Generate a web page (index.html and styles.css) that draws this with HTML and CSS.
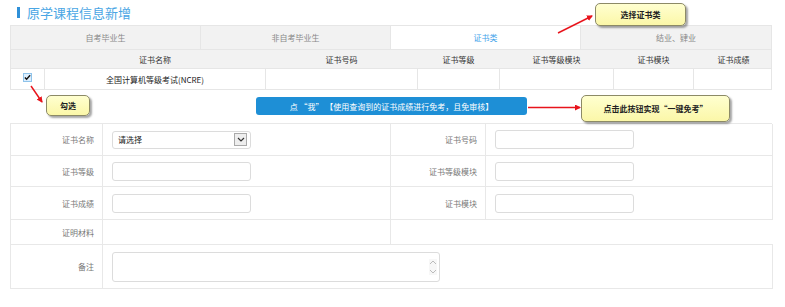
FILE: index.html
```html
<!DOCTYPE html>
<html lang="zh-CN">
<head>
  <meta charset="UTF-8">
  <meta name="viewport" content="width=device-width, initial-scale=1.0">
  <title>原学课程信息新增</title>
  <link rel="stylesheet" href="styles.css">
</head>
<body>
  <div class="page">
    <h2 class="title"><span class="bar"></span>原学课程信息新增</h2>

    <div class="wrap">
      <div class="tabs">
        <div class="tab">自考毕业生</div>
        <div class="tab">非自考毕业生</div>
        <div class="tab active">证书类</div>
        <div class="tab">结业、肄业</div>
      </div>

      <div class="grid head">
        <div></div>
        <div>证书名称</div>
        <div>证书号码</div>
        <div>证书等级</div>
        <div>证书等级模块</div>
        <div>证书模块</div>
        <div>证书成绩</div>
      </div>
      <div class="grid row">
        <div><span class="check">
          <svg width="8" height="7" viewBox="0 0 8 7"><path d="M1 3.5 L3 5.5 L7 1" fill="none" stroke="#111" stroke-width="1.6"/></svg>
        </span></div>
        <div>全国计算机等级考试(NCRE)</div>
        <div></div>
        <div></div>
        <div></div>
        <div></div>
        <div></div>
      </div>

      <div class="actions">
        <button class="btn">点 “我” 【使用查询到的证书成绩进行免考，且免审核】</button>
      </div>

      <div class="form">
        <div class="lbl">证书名称</div>
        <div class="val">
          <div class="select">请选择<span class="drop">
            <svg width="8" height="5" viewBox="0 0 8 5"><path d="M1 1 L4 4 L7 1" fill="none" stroke="#333" stroke-width="1.2"/></svg>
          </span></div>
        </div>
        <div class="lbl">证书号码</div>
        <div class="val"><div class="input"></div></div>

        <div class="lbl">证书等级</div>
        <div class="val"><div class="input"></div></div>
        <div class="lbl">证书等级模块</div>
        <div class="val"><div class="input"></div></div>

        <div class="lbl">证书成绩</div>
        <div class="val"><div class="input"></div></div>
        <div class="lbl">证书模块</div>
        <div class="val"><div class="input"></div></div>

        <div class="lbl">证明材料</div>
        <div class="val"></div>
        <div class="blank"></div>

        <div class="lbl">备注</div>
        <div class="val wide">
          <div class="textarea">
            <span class="spin">
              <svg width="8" height="16" viewBox="0 0 8 16"><path d="M1 5 L4 2 L7 5 M1 11 L4 14 L7 11" fill="none" stroke="#bbb" stroke-width="1"/></svg>
            </span>
          </div>
        </div>
      </div>
    </div>

    <div class="tip tip-type">选择证书类</div>
    <div class="tip tip-check">勾选</div>
    <div class="tip tip-btn">点击此按钮实现“一键免考”</div>

    <svg class="arrows" width="785" height="307" viewBox="0 0 785 307">
      <defs>
        <marker id="head" markerWidth="6" markerHeight="6" refX="5" refY="3" orient="auto" markerUnits="userSpaceOnUse">
          <path d="M0 0 L6 3 L0 6 Z" fill="#e8141c"/>
        </marker>
      </defs>
      <line x1="558" y1="33" x2="592" y2="16" stroke="#e8141c" stroke-width="1.5" marker-end="url(#head)"/>
      <line x1="31" y1="86" x2="42" y2="102" stroke="#e8141c" stroke-width="1.5" marker-end="url(#head)"/>
      <line x1="528" y1="107.5" x2="580" y2="107.5" stroke="#e8141c" stroke-width="1.5" marker-end="url(#head)"/>
    </svg>
  </div>
</body>
</html>
```

FILE: styles.css
```css
* {
  box-sizing: border-box;
}
body {
  margin: 0;
  background: #fff;
  font-family: "Noto Sans CJK SC", "Liberation Sans", sans-serif;
  font-size: 8px;
  color: #444;
}
.page {
  position: relative;
  width: 785px;
  height: 307px;
  overflow: hidden;
}
.title {
  margin: 0;
  height: 25px;
  padding-left: 17px;
  display: flex;
  align-items: center;
  gap: 7px;
  font-size: 13px;
  font-weight: normal;
  line-height: 14px;
  color: #4aa6e4;
}
.title .bar {
  width: 3px;
  height: 11px;
  background: #2f90d8;
}
.wrap {
  margin-left: 10px;
  width: 762px;
}
.tabs {
  display: grid;
  grid-template-columns: repeat(4, 1fr);
  height: 24px;
  border: 1px solid #e6e6e6;
  border-bottom: 0;
  background: #f2f2f2;
}
.tab {
  display: flex;
  align-items: center;
  justify-content: center;
  color: #888;
  border-right: 1px solid #e6e6e6;
}
.tab:last-child {
  border-right: 0;
}
.tab.active {
  background: #fff;
  color: #3fa3ea;
}
.grid {
  display: grid;
  grid-template-columns: 34px 221px 152px 82px 114px 80px 79px;
  border: 1px solid #e6e6e6;
  border-top: 0;
}
.grid > div {
  display: flex;
  align-items: center;
  justify-content: center;
  border-right: 1px solid #e6e6e6;
}
.grid > div:last-child {
  border-right: 0;
}
.head {
  height: 20px;
  background: #f2f2f2;
  color: #333;
  border-top: 1px solid #e6e6e6;
}
.head > div {
  border-right-color: #f2f2f2;
}
.row {
  height: 21px;
  color: #222;
}
.check {
  width: 9px;
  height: 9px;
  margin: -3px 0 0 0;
  border: 1px solid #8fc3ea;
  background: #dcefff;
  display: flex;
  align-items: center;
  justify-content: center;
}
.actions {
  height: 33px;
  display: flex;
  justify-content: center;
  align-items: center;
  padding-bottom: 1px;
}
.btn {
  width: 271px;
  height: 18px;
  margin-left: 1px;
  border: 0;
  border-radius: 3px;
  background: #1e8fd6;
  color: #fff;
  font-family: inherit;
  font-size: 8px;
  padding: 0;
}
.form {
  display: grid;
  grid-template-columns: 92px 288px 95px 287px;
  grid-template-rows: 32px 31px 33px 25px 44px;
  border-top: 1px solid #e8e8e8;
  border-left: 1px solid #e8e8e8;
}
.lbl,
.val {
  display: flex;
  align-items: center;
  border-right: 1px solid #e8e8e8;
  border-bottom: 1px solid #e8e8e8;
}
.lbl {
  justify-content: flex-end;
  padding-right: 8px;
  color: #777;
}
.val {
  padding-left: 9px;
}
.val.wide {
  grid-column: span 3;
}
.blank {
  grid-column: span 2;
  border-bottom: 1px solid #e8e8e8;
}
.input,
.select {
  width: 139px;
  height: 19px;
  border: 1px solid #dcdcdc;
  border-radius: 3px;
  background: #fff;
}
.select {
  display: flex;
  align-items: center;
  justify-content: space-between;
  padding: 0 3px 0 5px;
  color: #222;
  height: 18px;
}
.drop {
  width: 13px;
  height: 13px;
  border: 1px solid #aaa;
  background: #eee;
  display: flex;
  align-items: center;
  justify-content: center;
}
.textarea {
  width: 328px;
  height: 30px;
  border: 1px solid #dcdcdc;
  border-radius: 3px;
  display: flex;
  justify-content: flex-end;
  align-items: center;
  padding-right: 2px;
}
.spin {
  display: flex;
  background: #f7f7f7;
}
.tip {
  position: absolute;
  display: flex;
  align-items: center;
  justify-content: center;
  background: linear-gradient(#ffffd0, #fbf7a8);
  border: 1px solid #8c8a66;
  border-radius: 5px;
  box-shadow: 2px 2px 2px rgba(0, 0, 0, 0.35);
  color: #222;
  font-weight: bold;
}
.tip-type {
  left: 595px;
  top: 3px;
  width: 91px;
  height: 23px;
}
.tip-check {
  left: 46px;
  top: 95px;
  width: 44px;
  height: 21px;
}
.tip-btn {
  left: 581px;
  top: 95px;
  width: 149px;
  height: 27px;
}
.arrows {
  position: absolute;
  left: 0;
  top: 0;
  pointer-events: none;
}
```
